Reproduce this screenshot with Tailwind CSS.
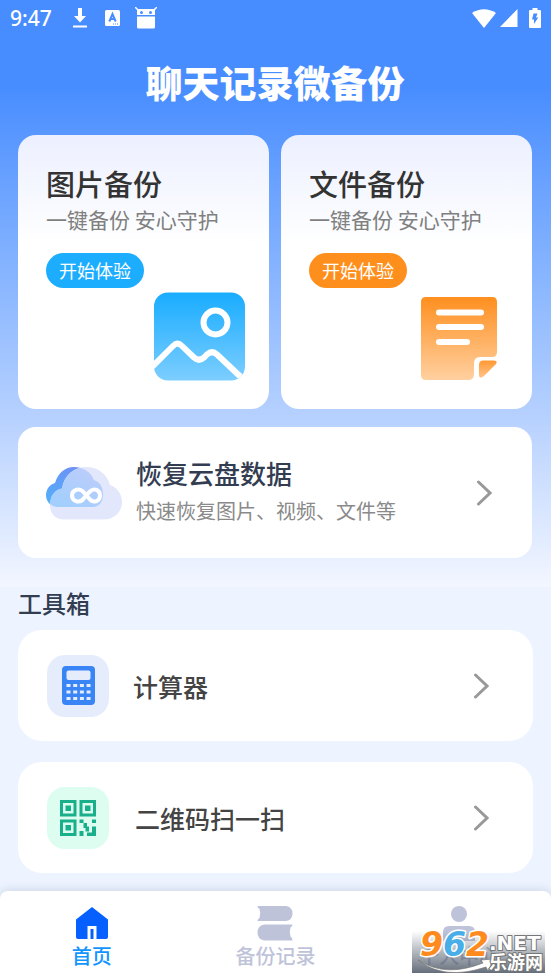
<!DOCTYPE html>
<html lang="zh-CN">
<head>
<meta charset="utf-8">
<meta name="viewport" content="width=device-width, initial-scale=1">
<title>聊天记录微备份</title>
<script src="https://cdn.jsdelivr.net/npm/@tailwindcss/browser@4"></script>
</head>
<body class="flex min-h-screen flex-col bg-[#edf4ff] font-['Noto_Sans_CJK_SC','Noto_Sans',sans-serif] text-[#333333]">

<div class="bg-linear-to-b from-[#488dff] from-15% via-[#b8d2ff] via-72% to-[#f3f6ff] pr-[19px] pb-[29px] pl-[18px]">
  <div class="-mr-[19px] -ml-[18px] flex h-9 items-center px-[10px] text-white">
    <span class="font-['Noto_Sans',sans-serif] text-[21px] leading-6 font-medium">9:47</span>
    <svg class="ml-5 h-[22px] w-4" viewBox="0 0 16 22" fill="currentColor" aria-hidden="true"><path d="M6 1h4v8h4l-6 6.500L2 9h4zM1 18.500h14v2H1z"/></svg>
    <svg class="ml-[17px] h-4 w-[15px]" viewBox="0 0 15 16" aria-hidden="true"><rect width="15" height="16" rx="1.500" fill="#fff"/><path d="M4.300 11.500 7.500 4l3.200 7.500M5.500 9h4" fill="none" stroke="#488dff" stroke-width="2"/><path d="M8 14h1m1 0h1m1 0h1" stroke="#488dff" stroke-width="1"/></svg>
    <svg class="ml-[15px] h-[22px] w-[22px]" viewBox="0 0 22 22" aria-hidden="true"><path d="M0 0l3.500 3.500M22 0l-3.500 3.500" stroke="#fff" stroke-width="1.500"/><path d="M2 3.500Q2 2 4 2h14q2 0 2 1.500V8H2zM2 9.500h18V20q0 1.500-1.500 1.500h-15Q2 21.500 2 20z" fill="#fff"/><circle cx="6.500" cy="5.500" r="1.500" fill="#488dff"/><circle cx="15.500" cy="5.500" r="1.500" fill="#488dff"/></svg>
    <svg class="ml-auto h-[19px] w-6" viewBox="0 0 24 19" fill="currentColor" aria-hidden="true"><path d="M0 4Q12-3.500 24 4L12 19z"/></svg>
    <svg class="ml-1 h-[18px] w-[18px]" viewBox="0 0 18 18" fill="currentColor" aria-hidden="true"><path d="M17.500 0v18H0z"/></svg>
    <svg class="ml-[11px] h-5 w-3" viewBox="0 0 12 20" aria-hidden="true"><path d="M3.500 0h5v2H11q1 0 1 1v16q0 1-1 1H1q-1 0-1-1V3q0-1 1-1h2.500z" fill="#fff"/><path d="M4.500 5.500h4L7 9.500h2.300L5 16v-4.500H3z" fill="#488dff"/></svg>
  </div>

  <h1 class="mt-[22px] mb-[29px] text-center text-[37px] leading-12 font-black text-white">聊天记录微备份</h1>

  <div class="grid grid-cols-2 gap-3">
    <section class="flex flex-col items-start rounded-[18px] bg-linear-to-b from-[#ecf0ff] to-white to-40% px-7 pt-7 pb-7">
      <h2 class="text-[29px] leading-10 font-medium">图片备份</h2>
      <p class="text-[21px] leading-8 whitespace-nowrap text-[#808080]">一键备份 安心守护</p>
      <button type="button" class="mt-[18px] h-[35px] rounded-full bg-[#1cadff] px-[13px] pb-[2px] text-[18px] leading-6 whitespace-nowrap text-white">开始体验</button>
      <svg class="mt-1 -mr-1 h-[89px] w-[91px] self-end" viewBox="0 0 91 89" aria-hidden="true">
        <defs><linearGradient id="photo" x2="0" y2="1"><stop stop-color="#18acff"/><stop offset="1" stop-color="#7dceff"/></linearGradient><clipPath id="photoClip"><rect width="91" height="88" y=".5" rx="14"/></clipPath></defs>
        <g clip-path="url(#photoClip)"><rect width="91" height="89" fill="url(#photo)"/><g fill="none" stroke="#fff" stroke-width="6"><circle cx="61.500" cy="30.500" r="12"/><path d="M-3 76 19 54Q23.500 49.500 28 54L40 65.500Q45 70 50 65.500L53 62.500Q58 58 63 62.500L91 89"/></g></g>
      </svg>
    </section>
    <section class="flex flex-col items-start rounded-[18px] bg-linear-to-b from-[#ecf0ff] to-white to-40% px-7 pt-7 pb-7">
      <h2 class="text-[29px] leading-10 font-medium">文件备份</h2>
      <p class="text-[21px] leading-8 whitespace-nowrap text-[#808080]">一键备份 安心守护</p>
      <button type="button" class="mt-[18px] h-[35px] rounded-full bg-[#ff8f1c] px-[13px] pb-[2px] text-[18px] leading-6 whitespace-nowrap text-white">开始体验</button>
      <svg class="mt-2 mr-[7px] h-[85px] w-[76px] self-end" viewBox="0 0 76 85" aria-hidden="true">
        <defs><linearGradient id="doc" x2="0" y2="1"><stop stop-color="#ff8f1f"/><stop offset="1" stop-color="#ffd0a0"/></linearGradient><linearGradient id="fold" x2="0" y2="1"><stop stop-color="#ff9833"/><stop offset="1" stop-color="#ffc48a"/></linearGradient></defs>
        <path d="M5 1h66q5 0 5 5v50q0 5-5 5h-12q-6 0-6 6v11q0 6-6 6H5q-5 0-5-5V6q0-5 5-5z" fill="url(#doc)"/>
        <path d="M62 64.500h11q4 0 2 3.500L63 80q-5 4-5-1V69q0-4.500 4-4.500z" fill="url(#fold)"/>
        <path d="M18 16.500h42M18 31h42M18 46h28" stroke="#fff" stroke-width="6" stroke-linecap="round"/>
      </svg>
    </section>
  </div>

  <a href="#restore" class="mt-[18px] flex h-[131px] items-center rounded-[18px] bg-white pr-10 pl-7">
    <svg class="h-[54px] w-[76px] shrink-0" viewBox="0 0 76 54" aria-hidden="true">
      <defs><linearGradient id="cloudBack" x1="0" y1="1" x2=".6" y2="0"><stop offset=".2" stop-color="#51b1fb"/><stop offset="1" stop-color="#718cf5"/></linearGradient><linearGradient id="cloudMix" x1="0" y1="1" x2=".7" y2="0"><stop stop-color="#96d0ff"/><stop offset="1" stop-color="#c0ccfa"/></linearGradient>
      <clipPath id="cloudFront"><path d="M18 53.500C10 53.500 4 48 4 39.500c0-9 4-15.500 12-17C18 9 28 1 40.500 1 52 1 61 8 64 19c7 2.500 12 9 12 17 0 10-8 17.500-18 17.500z"/></clipPath>
      <clipPath id="cloudRear"><path d="M12 41C5 41 0 35.500 0 29.500c0-6 3.500-11 9-12.500C12 7 19 1 28 1c9 0 17 5 20 13 6 2 9 7 9 14 0 8-4 13-10 13z"/></clipPath></defs>
      <g clip-path="url(#cloudRear)"><rect width="76" height="54" fill="url(#cloudBack)"/></g>
      <g clip-path="url(#cloudFront)"><rect width="76" height="54" fill="#e3e7fc"/><g clip-path="url(#cloudRear)"><rect width="76" height="54" fill="url(#cloudMix)"/></g></g>
      <path d="M40 29.500l4-4c4-4 10-1.500 10 4s-6 8-10 4l-7-8c-4-4-11-1.500-11 4s7 8 11 4z" fill="none" stroke="#fff" stroke-width="4"/>
    </svg>
    <div class="ml-[14px]">
      <h2 class="text-[26px] leading-9 font-medium text-[#333d52]">恢复云盘数据</h2>
      <p class="text-[20px] leading-10 whitespace-nowrap text-[#8a8a8a]">快速恢复图片、视频、文件等</p>
    </div>
    <svg class="ml-auto h-[26px] w-4 shrink-0" viewBox="0 0 16 26" fill="none" stroke="#999" stroke-width="3" stroke-linecap="round" aria-hidden="true"><path d="M2.500 2 14 13 2.500 24"/></svg>
  </a>
</div>

<main class="flex-1 px-[18px] pb-[17px]">
  <h2 class="h-[43px] text-[24px] leading-8 font-medium text-[#333d52]">工具箱</h2>
  <ul class="flex flex-col gap-[21px]">
    <li><a href="#calculator" class="flex h-[111px] items-center rounded-3xl bg-white pr-11 pl-[29px]">
      <span class="flex size-[62px] shrink-0 items-center justify-center rounded-[18px] bg-[#e5edfd]">
        <svg class="h-[39px] w-[33px]" viewBox="0 0 33 39" aria-hidden="true"><rect width="33" height="39" rx="4" fill="#3985f5"/><rect x="4.500" y="4.500" width="24" height="9.500" rx="2" fill="#e5edfd"/><path d="M4.500 19.500h24M4.500 26h24M4.500 32.500h24" stroke="#e5edfd" stroke-width="3" stroke-dasharray="4 2.700"/></svg>
      </span>
      <span class="ml-6 text-[25px] leading-9 font-medium text-[#444]">计算器</span>
      <svg class="ml-auto h-[26px] w-4 shrink-0" viewBox="0 0 16 26" fill="none" stroke="#999" stroke-width="3" stroke-linecap="round" aria-hidden="true"><path d="M2.500 2 14 13 2.500 24"/></svg>
    </a></li>
    <li><a href="#scan" class="flex h-[111px] items-center rounded-3xl bg-white pr-11 pl-[29px]">
      <span class="flex size-[62px] shrink-0 items-center justify-center rounded-[18px] bg-[#dcfdf0]">
        <svg class="size-9" viewBox="0 0 36 36" fill="#1aaf8b" aria-hidden="true"><g fill="none" stroke="#1aaf8b" stroke-width="3"><rect x="1.500" y="1.500" width="13.500" height="13.500"/><rect x="21" y="1.500" width="13.500" height="13.500"/><rect x="1.500" y="21" width="13.500" height="13.500"/></g><path d="M5.500 5.500h5.500V11H5.500zM25 5.500h5.500V11H25zM5.500 25H11v5.500H5.500zM19.500 19.500h4V23h-4zM32 19.500h4V23h-4zM23.500 23h3.500v3.500h2v5h-3.500V28h-2zM19.500 31h4v5h-4zM32 26.500h4V36h-9v-3.500h5z"/></svg>
      </span>
      <span class="ml-[26px] text-[25px] leading-9 font-medium text-[#444]">二维码扫一扫</span>
      <svg class="ml-auto h-[26px] w-4 shrink-0" viewBox="0 0 16 26" fill="none" stroke="#999" stroke-width="3" stroke-linecap="round" aria-hidden="true"><path d="M2.500 2 14 13 2.500 24"/></svg>
    </a></li>
  </ul>
</main>

<nav class="relative grid h-[88px] grid-cols-3 rounded-t-lg bg-white pt-[14px] text-[20px] leading-[30px] text-[#bfc3da] shadow-[0_-2px_8px_rgba(80,100,140,0.18)]">
  <a href="#home" class="flex flex-col items-center text-[#1295ff]">
    <svg class="h-9 w-9" viewBox="0 0 36 36" aria-hidden="true"><path d="M18 2 34 14.500V32q0 2-2 2H22.500V21h-9v13H4q-2 0-2-2V14.500z" fill="#0560ff"/><path d="M16.500 24h3v10h-3z" fill="#0560ff"/></svg>
    <span class="font-medium">首页</span>
  </a>
  <a href="#records" class="flex flex-col items-center">
    <svg class="h-9 w-9" viewBox="0 0 36 36" fill="currentColor" aria-hidden="true"><path d="M.5 1H29q6.500 1 6.500 7.500T29 16H.5q0-2 2-3Q4 8 2.500 4 .5 3 .5 1zM7 19.500h28.500q0 2-2 3-1.500 4.500 0 9 2 1 2 4H7Q.5 34 .5 27.500T7 19.500z"/></svg>
    <span class="font-medium">备份记录</span>
  </a>
  <a href="#profile" class="flex flex-col items-center">
    <svg class="h-9 w-9" viewBox="0 0 36 36" fill="currentColor" aria-hidden="true"><circle cx="18" cy="9" r="8"/><path d="M8 21h20q6 0 6 6v9H2v-9q0-6 6-6z"/></svg>
    <span class="font-medium">个人中心</span>
  </a>
  <div class="absolute right-[6px] bottom-[6px] h-[42px] w-[133px] bg-linear-to-b from-gray-500/0 to-gray-600/85">
    <svg class="absolute -top-1 left-0 h-[46px] w-[133px] overflow-visible" viewBox="0 0 133 46" role="img" aria-label="962.NET 乐游网">
      <path d="M6 33Q33 51 71 36l-2-3 13-1-6 12-2-4Q32 54 6 33z" fill="#fff" stroke="#777" stroke-width=".7"/>
      <g font-family="DejaVu Sans, sans-serif" font-weight="bold" stroke="#fff" stroke-width="3" paint-order="stroke" stroke-linejoin="round">
        <text x="8" y="29" font-size="33" font-style="italic"><tspan fill="#ff8b20">9</tspan><tspan fill="#47aee8">6</tspan><tspan fill="#ff8b20">2</tspan></text>
        <text x="77" y="23" font-size="20" fill="#fff" stroke="#777" stroke-width="2">.NET</text>
      </g>
      <text x="77" y="42" font-family="Noto Sans CJK SC, sans-serif" font-size="18" font-weight="bold" fill="#fff" stroke="#777" stroke-width="2" paint-order="stroke">乐游网</text>
    </svg>
  </div>
</nav>
</body>
</html>
